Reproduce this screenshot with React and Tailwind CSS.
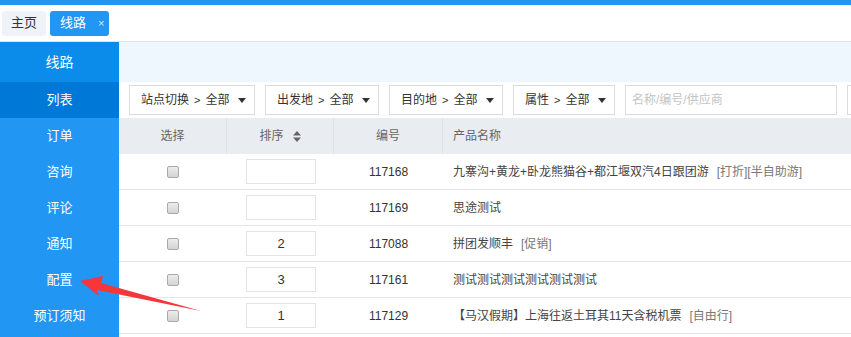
import { useState } from "react";

const menu = ["订单", "咨询", "评论", "通知", "配置", "预订须知"];

const filters = [
    { label: "站点切换", w: "w-[126px]" },
    { label: "出发地", w: "w-[114px]" },
    { label: "目的地", w: "w-[114px]" },
    { label: "属性", w: "w-[102px]" },
];

const rows = [
    { id: "117168", sort: "", name: "九寨沟+黄龙+卧龙熊猫谷+都江堰双汽4日跟团游", tags: "[打折][半自助游]" },
    { id: "117169", sort: "", name: "思途测试", tags: "" },
    { id: "117088", sort: "2", name: "拼团发顺丰", tags: "[促销]" },
    { id: "117161", sort: "3", name: "测试测试测试测试测试测试", tags: "" },
    { id: "117129", sort: "1", name: "【马汉假期】上海往返土耳其11天含税机票", tags: "[自由行]" },
];

function Caret() {
    return (
        <svg width="8" height="5" viewBox="0 0 8 5" className="ml-[9px]">
            <path d="M0 0h8L4 5z" fill="#333" />
        </svg>
    );
}

function SortIcon() {
    return (
        <svg width="8" height="11" viewBox="0 0 8 11" className="ml-[9px]">
            <path d="M4 0l4 4.5H0zM4 11L0 6.5h8z" fill="#666" />
        </svg>
    );
}

function Checkbox() {
    return (
        <span className="block w-[12px] h-[12px] rounded-[2px] border border-[#a9a9a9] bg-gradient-to-b from-[#ececec] to-[#d4d4d4]" />
    );
}

export default function App() {
    const [active] = useState("列表");

    return (
        <div
            className="relative w-[851px] h-[337px] overflow-hidden bg-white text-[12px] text-[#333]"
            style={{ fontFamily: '"Liberation Sans", "Noto Sans CJK SC", sans-serif' }}
        >
            <div className="h-[5px] bg-[#2196f3]" />
            <div className="h-[37px] flex items-center gap-[4px] pl-[2px] border-b border-[#e1e4e9]">
                <div className="h-[25px] w-[44px] flex items-center justify-center rounded-[3px] bg-[#eff2f8] text-[13px] text-[#333]">
                    主页
                </div>
                <div className="h-[25px] w-[59px] flex items-center pl-[10px] rounded-[3px] bg-[#2196f3] text-[13px] text-white">
                    线路
                    <span className="ml-[12px] text-[11px] text-[#d6ebfd]">×</span>
                </div>
            </div>

            <div className="flex h-[295px]">
                <aside className="w-[119px] shrink-0 bg-[#2196f3] text-white">
                    <div className="h-[40px] flex items-center justify-center bg-[#0b8bea] text-[14px]">线路</div>
                    <div
                        className={
                            "h-[36px] flex items-center justify-center text-[13px] " +
                            (active === "列表" ? "bg-[#0078d8]" : "")
                        }
                    >
                        列表
                    </div>
                    {menu.map((m) => (
                        <div key={m} className="h-[36px] flex items-center justify-center text-[13px]">
                            {m}
                        </div>
                    ))}
                </aside>

                <main className="flex-1 min-w-0">
                    <div className="h-[40px] bg-[#eef6fe]" />
                    <div className="h-[36px] flex items-center gap-[10px] pl-[10px] bg-white">
                        {filters.map((f) => (
                            <div
                                key={f.label}
                                className={f.w + " shrink-0 h-[30px] flex items-center pl-[11px] border border-[#dcdcdc] text-[12px] text-[#333] whitespace-nowrap"}
                            >
                                {f.label}
                                <span className="mx-[5px] text-[11px]">&gt;</span>
                                全部
                                <Caret />
                            </div>
                        ))}
                        <div className="w-[212px] shrink-0 h-[30px] flex items-center pl-[6px] border border-[#dcdcdc] text-[12px] text-[#c4c4c4]">
                            名称/编号/供应商
                        </div>
                        <div className="w-[20px] shrink-0 h-[30px] border border-[#dcdcdc]" />
                    </div>

                    <div className="grid grid-cols-[108px_107px_109px_1fr] h-[36px] bg-[#e9ecf1] text-[#666] text-[12px]">
                        <div className="flex items-center justify-center border-r border-[#dfe3e9]">选择</div>
                        <div className="flex items-center justify-center border-r border-[#dfe3e9]">
                            排序
                            <SortIcon />
                        </div>
                        <div className="flex items-center justify-center border-r border-[#dfe3e9]">编号</div>
                        <div className="flex items-center pl-[10px]">产品名称</div>
                    </div>

                    {rows.map((r) => (
                        <div
                            key={r.id}
                            className="grid grid-cols-[108px_107px_109px_1fr] h-[36px] border-b border-[#e3e7ec] text-[12px]"
                        >
                            <div className="flex items-center justify-center">
                                <Checkbox />
                            </div>
                            <div className="flex items-center pl-[19px]">
                                <div className="w-[70px] h-[25px] border border-[#e4e4e4] flex items-center justify-center text-[13px] text-[#333]">
                                    {r.sort}
                                </div>
                            </div>
                            <div className="flex items-center justify-center text-[#333]">{r.id}</div>
                            <div className="flex items-center pl-[10px] whitespace-nowrap text-[#444]">
                                {r.name}
                                {r.tags && <span className="ml-[8px] text-[#777]">{r.tags}</span>}
                            </div>
                        </div>
                    ))}
                </main>
            </div>

            <svg className="absolute left-0 top-0 pointer-events-none" width="851" height="337">
                <polygon
                    points="80,281 103,276 101,283 201,311 97,290 99,296"
                    fill="#f5363a"
                />
            </svg>
        </div>
    );
}
